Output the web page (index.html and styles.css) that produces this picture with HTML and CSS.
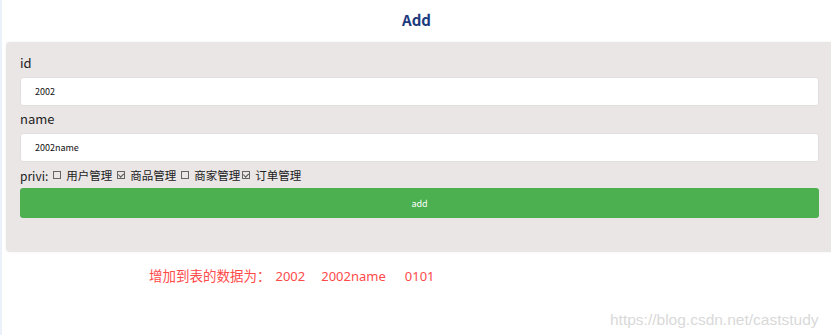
FILE: index.html
```html
<!DOCTYPE html>
<html lang="zh-CN">
<head>
    <meta charset="UTF-8">
    <meta name="viewport" content="width=device-width, initial-scale=1.0">
    <title>Add</title>
    <link rel="stylesheet" href="styles.css">
</head>
<body>
    <h2>Add</h2>
    <form class="panel">
        <label class="field-label" for="id">id</label>
        <input class="field" type="text" id="id" name="id" value="2002">

        <label class="field-label" for="name">name</label>
        <input class="field" type="text" id="name" name="name" value="2002name">

        <div class="privi">
            <span>privi:</span>
            <span class="box"></span><span class="opt">用户管理</span>
            <span class="box checked"></span><span class="opt">商品管理</span>
            <span class="box"></span><span class="opt tight">商家管理</span>
            <span class="box checked"></span><span class="opt">订单管理</span>
        </div>

        <button type="button" class="add-btn">add</button>
    </form>
    <p class="result">增加到表的数据为：<span class="val v-id">2002</span><span class="val v-name">2002name</span><span class="val v-privi">0101</span></p>
    <div class="watermark">https://blog.csdn.net/caststudy</div>
</body>
</html>
```

FILE: styles.css
```css
body {
    font-family: "Noto Sans CJK SC", "Noto Sans", sans-serif;
    background-color: #fff;
    margin: 0;
    padding: 0;
    height: 335px;
    border-left: 2px solid #eaf1fa;
    box-sizing: border-box;
    overflow: hidden;
}

h2 {
    margin: 0;
    height: 40px;
    line-height: 40px;
    text-align: center;
    font-size: 15px;
    font-weight: bold;
    color: #1d3b7c;
}

.panel {
    margin: 2px 0 0 4px;
    padding: 11px 12px 34px 14px;
    background-color: #ebe6e6;
    border-radius: 4px 0 0 4px;
    box-shadow: 0 0 2px rgba(0, 0, 0, 0.08);
}

.field-label {
    display: block;
    font-size: 13px;
    line-height: 20px;
    color: #222;
}

.field {
    display: block;
    box-sizing: border-box;
    width: 100%;
    height: 29px;
    margin: 4px 0 3px;
    padding: 0 14px;
    border: 1px solid #e2dede;
    border-radius: 3px;
    background: #fff;
    font-family: inherit;
    font-size: 9px;
    color: #111;
}

.privi {
    display: flex;
    align-items: center;
    height: 20px;
    margin: 1px 0 3px;
    font-size: 12px;
    color: #222;
}

.opt {
    font-size: 11.5px;
}

.box {
    display: inline-block;
    box-sizing: border-box;
    width: 8px;
    height: 8px;
    margin: 0 5px 0 5px;
    border: 1px solid #666;
    position: relative;
}

.box.checked::after {
    content: "";
    position: absolute;
    left: 1px;
    top: 0;
    width: 3px;
    height: 4px;
    border: solid #555;
    border-width: 0 1px 1px 0;
    transform: rotate(45deg);
}

.opt.tight + .box {
    margin-left: 2px;
}

.add-btn {
    display: block;
    width: 100%;
    height: 30px;
    border: none;
    border-radius: 3px;
    background-color: #4caf50;
    color: #fff;
    font-family: inherit;
    font-size: 9px;
}

.result {
    margin: 14px 0 0 147px;
    line-height: 18px;
    font-size: 13.5px;
    color: #ff4a4a;
}

.val {
    font-family: "Noto Sans", sans-serif;
    font-size: 13px;
}

.v-id {
    margin-left: 5px;
}

.v-name {
    margin-left: 16px;
}

.v-privi {
    margin-left: 19px;
}

.watermark {
    margin: 26px 0 0 608px;
    font-family: "Liberation Sans", sans-serif;
    font-size: 15.5px;
    color: #d9d9d9;
}
```
